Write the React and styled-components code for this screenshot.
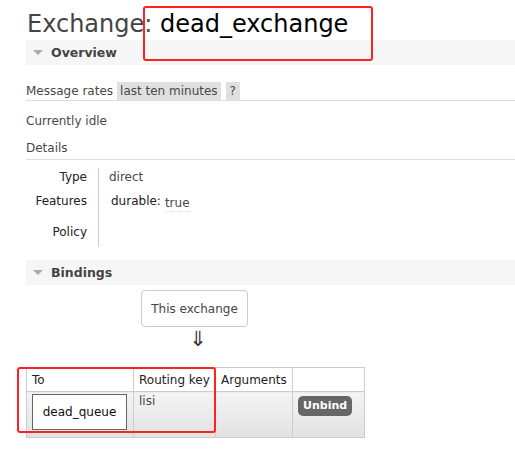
import React from "react";
import styled, { createGlobalStyle } from "styled-components";

const GlobalStyle = createGlobalStyle`
  body {
    margin: 0;
    background: #fff;
    font-family: "DejaVu Sans", Verdana, sans-serif;
    font-size: 12px;
    color: #484848;
  }
`;

const Page = styled.div`
  padding: 0 0 0 26px;
  width: 489px;
`;

const Title = styled.h1`
  margin: 0;
  padding: 9px 0 0 1px;
  height: 31px;
  font-size: 24px;
  line-height: 30px;
  font-weight: normal;
  color: #444;
`;

const Highlight = styled.span`
  position: relative;
  color: #000;
  &::after {
    content: "";
    position: absolute;
    left: -17px;
    top: -4px;
    width: 226px;
    height: 51px;
    border: 2px solid #f22;
    border-radius: 3px;
  }
`;

const SectionBar = styled.div`
  display: flex;
  align-items: center;
  gap: 8px;
  height: 25px;
  padding-left: 7px;
  background: #f6f6f6;
  font-weight: bold;
  font-size: 12.5px;
  color: #444;
  margin-top: ${(p) => p.$top || 0}px;
`;

const Caret = styled.span`
  width: 0;
  height: 0;
  border-left: 5px solid transparent;
  border-right: 5px solid transparent;
  border-top: 5px solid #aaa;
`;

const RateRow = styled.div`
  display: flex;
  align-items: center;
  gap: 4px;
  margin-top: 17px;
  height: 18px;
  border-bottom: 1px solid #ddd;
`;

const Chip = styled.span`
  background: #e0e0e0;
  padding: 0 ${(p) => p.$px || 3}px;
  line-height: 18px;
  align-self: flex-start;
  margin-left: ${(p) => p.$ml || 0}px;
`;

const Line = styled.div`
  line-height: 16px;
  padding: ${(p) => p.$pad || "0"};
  border-bottom: ${(p) => (p.$rule ? "1px solid #ddd" : "none")};
`;

const Facts = styled.div`
  display: grid;
  grid-template-columns: 72px auto;
  margin-top: 8px;
`;

const FactLabel = styled.div`
  text-align: right;
  color: #222;
  padding-right: 11px;
  height: ${(p) => p.$h}px;
  line-height: 16px;
  padding-top: ${(p) => p.$pt || 0}px;
`;

const FactValue = styled.div`
  border-left: 1px solid #ccc;
  padding-left: 10px;
  height: ${(p) => p.$h}px;
  line-height: 16px;
  padding-top: ${(p) => p.$pt || 0}px;
`;

const Key = styled.span`
  color: #222;
  margin-left: 2px;
`;

const TrueVal = styled.span`
  display: inline-block;
  margin-left: 4px;
  transform: translateY(2px);
  border-bottom: 1px dotted #ddd;
`;

const Source = styled.div`
  margin: 5px 0 0 115px;
  width: 105px;
  height: 35px;
  border: 1px solid #ccc;
  border-radius: 4px;
  display: flex;
  align-items: center;
  justify-content: center;
  color: #444;
`;

const Arrow = styled.div`
  margin-left: 163px;
  height: 22px;
  font-size: 21px;
  line-height: 24px;
  color: #333;
`;

const TableWrap = styled.div`
  position: relative;
  margin-top: 18px;
  width: 338px;
  &::after {
    content: "";
    position: absolute;
    left: -9px;
    top: 0;
    width: 195px;
    height: 62px;
    border: 2px solid #f22;
    border-radius: 3px;
    pointer-events: none;
  }
`;

const Table = styled.table`
  border-collapse: collapse;
  table-layout: fixed;
  width: 338px;
  font-size: 12px;
`;

const Col = styled.col`
  width: ${(p) => p.$w}px;
`;

const Th = styled.th`
  box-sizing: border-box;
  border: 1px solid #ccc;
  text-align: left;
  font-weight: normal;
  color: #222;
  height: 24px;
  padding: 0 0 0 5px;
  white-space: nowrap;
`;

const Td = styled.td`
  border: 1px solid #ccc;
  vertical-align: top;
  padding: 2px 5px;
  height: 41px;
  background: linear-gradient(#f4f4f4, #e2e2e2);
`;

const QueueBox = styled.div`
  width: 93px;
  height: 34px;
  border: 1px solid #666;
  background: #fff;
  display: flex;
  align-items: center;
  justify-content: center;
  color: #111;
`;

const Unbind = styled.button`
  margin: 2px 0 0 0;
  background: #666;
  color: #fff;
  border: none;
  border-radius: 5px;
  font-family: inherit;
  font-weight: bold;
  font-size: 11px;
  padding: 0 5px;
  height: 20px;
  line-height: 20px;
`;

export default function App() {
  return (
    <>
      <GlobalStyle />
      <Page>
        <Title>
          Exchange: <Highlight>dead_exchange</Highlight>
        </Title>
        <SectionBar>
          <Caret />
          Overview
        </SectionBar>
        <RateRow>
          Message rates
          <Chip>last ten minutes</Chip>
          <Chip $px={4} $ml={1}>?</Chip>
        </RateRow>
        <Line $pad="12px 0 0 0">Currently idle</Line>
        <Line $pad="11px 0 3px 0" $rule>
          Details
        </Line>
        <Facts>
          <FactLabel $h={24} $pt={1}>Type</FactLabel>
          <FactValue $h={24} $pt={1}>direct</FactValue>
          <FactLabel $h={30} $pt={0}>Features</FactLabel>
          <FactValue $h={30} $pt={0}>
            <Key>durable:</Key>
            <TrueVal>true</TrueVal>
          </FactValue>
          <FactLabel $h={23} $pt={1}>Policy</FactLabel>
          <FactValue $h={23} $pt={1} />
        </Facts>
        <SectionBar $top={13}>
          <Caret />
          Bindings
        </SectionBar>
        <Source>This exchange</Source>
        <Arrow>⇓</Arrow>
        <TableWrap>
          <Table>
            <colgroup>
              <Col $w={107} />
              <Col $w={82} />
              <Col $w={77} />
              <Col $w={72} />
            </colgroup>
            <thead>
              <tr>
                <Th>To</Th>
                <Th>Routing key</Th>
                <Th>Arguments</Th>
                <Th></Th>
              </tr>
            </thead>
            <tbody>
              <tr>
                <Td>
                  <QueueBox>dead_queue</QueueBox>
                </Td>
                <Td>lisi</Td>
                <Td></Td>
                <Td>
                  <Unbind>Unbind</Unbind>
                </Td>
              </tr>
            </tbody>
          </Table>
        </TableWrap>
      </Page>
    </>
  );
}
